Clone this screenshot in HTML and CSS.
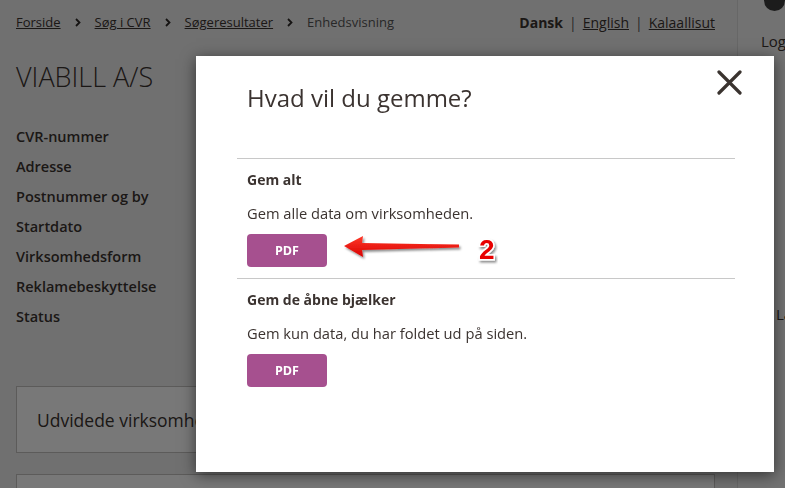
FILE: index.html
```html
<!DOCTYPE html>
<html lang="da">
<head>
<meta charset="utf-8">
<title>CVR - Enhedsvisning</title>
<link rel="stylesheet" href="styles.css">
</head>
<body>
<div class="page">
  <div class="main">
    <div class="topbar">
      <nav class="crumbs"><a href="#">Forside</a><svg class="chev" width="6" height="9" viewBox="0 0 6 9"><path d="M1 1 L4.5 4.5 L1 8" stroke="#2e2a28" stroke-width="1.8" fill="none"/></svg><a href="#">Søg i CVR</a><svg class="chev" width="6" height="9" viewBox="0 0 6 9"><path d="M1 1 L4.5 4.5 L1 8" stroke="#2e2a28" stroke-width="1.8" fill="none"/></svg><a href="#">Søgeresultater</a><svg class="chev" width="6" height="9" viewBox="0 0 6 9"><path d="M1 1 L4.5 4.5 L1 8" stroke="#2e2a28" stroke-width="1.8" fill="none"/></svg><span class="current">Enhedsvisning</span></nav>
      <div class="langs"><strong>Dansk</strong><span class="sep">|</span><a href="#">English</a><span class="sep">|</span><a href="#">Kalaallisut</a></div>
    </div>
    <h1 class="company">VIABILL A/S</h1>
    <ul class="fields">
      <li>CVR-nummer</li>
      <li>Adresse</li>
      <li>Postnummer og by</li>
      <li>Startdato</li>
      <li>Virksomhedsform</li>
      <li>Reklamebeskyttelse</li>
      <li>Status</li>
    </ul>
    <div class="panel">Udvidede virksomhedsoplysninger</div>
    <div class="panel panel-next"></div>
  </div>
  <aside class="side">
    <div class="side-top"><span class="info-dot"></span></div>
    <div class="side-login">Log ind</div>
    <div class="side-la">Lagre</div>
  </aside>
</div>

<div class="overlay"></div>

<div class="modal">
  <div class="modal-head">
    <h2 class="modal-title">Hvad vil du gemme?</h2>
  </div>
  <button class="close" aria-label="Luk">
    <svg width="25" height="25" viewBox="0 0 25 25"><path d="M2 2 L23 23 M23 2 L2 23" stroke="#3a332f" stroke-width="3.2" stroke-linecap="round" fill="none"/></svg>
  </button>
  <section class="option">
    <h3>Gem alt</h3>
    <p>Gem alle data om virksomheden.</p>
    <button class="pdf">PDF</button>
  </section>
  <section class="option">
    <h3>Gem de åbne bjælker</h3>
    <p>Gem kun data, du har foldet ud på siden.</p>
    <button class="pdf">PDF</button>
  </section>
</div>

<svg class="annot" width="170" height="40" viewBox="0 0 170 40">
  <defs>
    <linearGradient id="ag" x1="0" y1="0" x2="0" y2="1">
      <stop offset="0" stop-color="#ff3a2a"/>
      <stop offset="1" stop-color="#d80000"/>
    </linearGradient>
    <filter id="sh" x="-10%" y="-30%" width="130%" height="180%">
      <feDropShadow dx="1.5" dy="2" stdDeviation="1.2" flood-color="#000" flood-opacity="0.45"/>
    </filter>
  </defs>
  <polygon filter="url(#sh)" fill="url(#ag)" points="3,16 22,6 21,13 118,14.5 118,17.5 21,20 22,27"/>
  <text x="138" y="29" class="num" filter="url(#sh)">2</text>
</svg>
</body>
</html>
```
FILE: styles.css
```css
html, body {
  margin: 0;
  padding: 0;
}
body {
  width: 785px;
  height: 488px;
  overflow: hidden;
  font-family: "Open Sans", "Noto Sans", sans-serif;
  color: #3b3330;
  background: #efefef;
}
.page {
  display: flex;
  height: 488px;
  overflow: hidden;
}
.main {
  width: 737px;
  flex: 0 0 737px;
  box-sizing: border-box;
  padding: 0 22px 0 16px;
}
.topbar {
  height: 44px;
  display: flex;
  align-items: center;
  justify-content: space-between;
  font-size: 13px;
}
.crumbs {
  display: flex;
  align-items: center;
}
.crumbs a, .langs a {
  color: #3b3330;
  text-decoration: underline;
}
.chev {
  display: block;
  margin: 1px 14px 0 14px;
}
.current {
  color: #555;
}
.langs {
  font-size: 14px;
}
.langs strong {
  font-weight: 700;
}
.sep {
  margin: 0 6px;
  color: #555;
}
.company {
  margin: 17px 0 0;
  font-size: 27px;
  line-height: 32px;
  font-weight: 300;
}
.fields {
  list-style: none;
  margin: 29px 0 0;
  padding: 0;
}
.fields li {
  font-size: 14.5px;
  font-weight: 600;
  line-height: 30px;
}
.panel {
  margin-top: 54px;
  height: 67px;
  box-sizing: border-box;
  border: 1px solid #c4c2c0;
  background: #fff;
  padding-left: 20px;
  display: flex;
  align-items: center;
  font-size: 17.5px;
  white-space: nowrap;
  overflow: hidden;
}
.panel-next {
  margin-top: 21px;
}
.side {
  flex: 1;
  min-width: 0;
  border-left: 1px solid #dcdcdc;
  background: #f2f2f2;
  position: relative;
  overflow: hidden;
}
.side-top {
  height: 31px;
}
.info-dot {
  position: absolute;
  left: 26px;
  top: -10px;
  width: 21px;
  height: 21px;
  border-radius: 50%;
  background: #3c3c3c;
}
.side-login {
  padding-left: 23px;
  font-size: 15px;
  white-space: nowrap;
}
.side-la {
  margin-top: 253px;
  padding-left: 38px;
  font-size: 15px;
  white-space: nowrap;
}
.overlay {
  position: fixed;
  inset: 0;
  background: rgba(0, 0, 0, 0.53);
}
.modal {
  position: absolute;
  left: 196px;
  top: 56px;
  width: 578px;
  height: 416px;
  box-sizing: border-box;
  background: #fff;
  padding: 0 39px 0 41px;
  box-shadow: 0 3px 14px rgba(0, 0, 0, 0.55);
}
.modal-head {
  height: 102px;
  box-sizing: border-box;
  padding: 26px 0 0 10px;
}
.modal-title {
  margin: 0;
  font-size: 24px;
  line-height: 32px;
  font-weight: 400;
  color: #3b3330;
}
.close {
  position: absolute;
  top: 14px;
  right: 32px;
  width: 25px;
  height: 25px;
  padding: 0;
  border: 0;
  background: none;
}
.close svg {
  display: block;
}
.option {
  border-top: 1px solid #c8c8c8;
  padding: 11px 0 11px 10px;
}
.option h3 {
  margin: 0;
  font-size: 14px;
  line-height: 20px;
  font-weight: 700;
  color: #3b3330;
}
.option p {
  margin: 13px 0 0;
  font-size: 14.7px;
  line-height: 20px;
  color: #3b3330;
}
.pdf {
  display: block;
  margin-top: 11px;
  width: 80px;
  height: 33px;
  border: 0;
  border-radius: 4px;
  background: #a6508f;
  color: #fff;
  font-family: "Open Sans", sans-serif;
  font-size: 12.5px;
  font-weight: 700;
}
.annot {
  position: absolute;
  left: 341px;
  top: 230px;
}
.num {
  font-family: "Liberation Sans", Arial, sans-serif;
  font-size: 28px;
  font-weight: 700;
  fill: #e80000;
  stroke: #fff;
  stroke-width: 3px;
  paint-order: stroke;
}
```
